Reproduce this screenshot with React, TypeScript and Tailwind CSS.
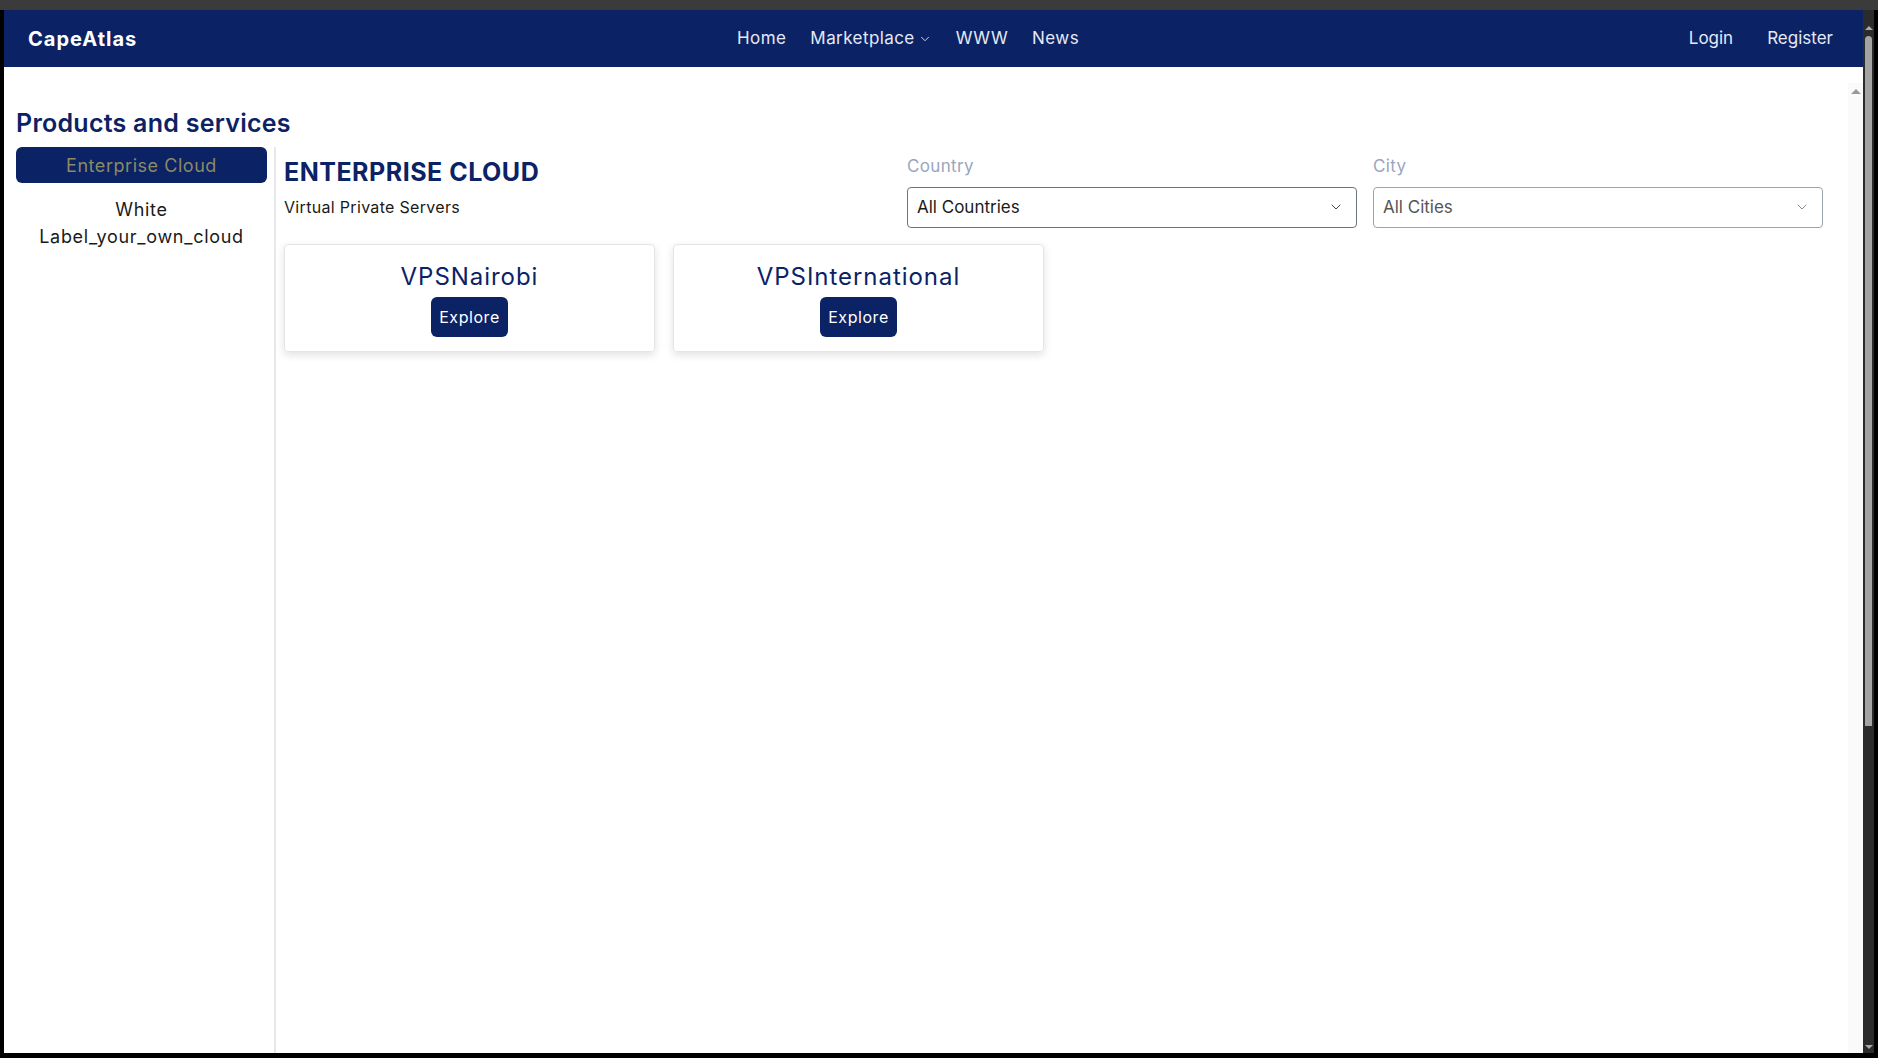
import { ChevronDown } from 'lucide-react';

const navy = 'bg-[#0b2265]';

const navLinks = ['Home', 'Marketplace', 'WWW', 'News'];

const products = [
	{ name: 'VPSNairobi' },
	{ name: 'VPSInternational' },
];

const App = () => {
	return (
		<div
			className="w-full h-screen bg-black flex flex-col overflow-hidden"
			style={{ fontFamily: 'Inter, "Noto Sans", sans-serif' }}
		>
			{/* Browser top strip */}
			<div className="h-[10px] bg-[#3b3b3b] shrink-0" />

			<div className="flex flex-1 min-h-0">
				<div className="w-[4px] bg-black shrink-0" />

				{/* Page */}
				<div className="flex-1 flex flex-col bg-white min-w-0">
					{/* Navbar */}
					<nav className={`h-[57px] ${navy} flex items-center pl-6 pr-[30px] shrink-0`}>
						<div className="w-[709px] shrink-0 text-white font-bold text-[20px] tracking-[0.05em]">CapeAtlas</div>
						<div className="flex items-center gap-[24px] text-[17px] tracking-[0.025em] text-[#e5e9f5]">
							{navLinks.map(link => (
								<a key={link} className="flex items-center gap-[3px] cursor-pointer">
									{link}
									{link === 'Marketplace' && <ChevronDown size={14} strokeWidth={1.5} />}
								</a>
							))}
						</div>
						<div className="flex-1" />
						<div className="flex items-center gap-[34px] text-[17px] text-[#e5e9f5]">
							<a>Login</a>
							<a>Register</a>
						</div>
					</nav>

					<div className="flex flex-1 min-h-0">
						<div className="flex-1 flex flex-col min-w-0 pl-3">
							<h1 className="text-[#0b2265] font-semibold text-[25px] tracking-[0.01em] mt-[41px] mb-[8px] leading-tight">
								Products and services
							</h1>

							<div className="flex flex-1 min-h-0">
								{/* Sidebar */}
								<aside className="w-[260px] shrink-0 border-r-2 border-[#e8e8e8] pr-2">
									<button className={`w-[251px] h-[36px] rounded-md ${navy} text-[#8b8a66] text-[18px] tracking-[0.03em]`}>
										Enterprise Cloud
									</button>
									<div className="w-[251px] text-center text-[18px] tracking-[0.04em] text-[#1a1a1a] leading-[27px] mt-[13px]">
										White
										<br />
										Label_your_own_cloud
									</div>
								</aside>

								{/* Main */}
								<main className="flex-1 pl-[8px] pr-[25px]">
									<div className="flex">
										<div className="flex-1">
											<h2 className="text-[#0b2265] font-bold text-[25px] tracking-[0.02em] leading-tight mt-[10px]">
												ENTERPRISE CLOUD
											</h2>
											<p className="text-[16px] tracking-[0.02em] text-[#1a1a1a] mt-[6px]">Virtual Private Servers</p>
										</div>
										<div className="w-[450px] mr-4">
											<label className="block text-[17px] tracking-[0.02em] text-[#9aa6bd] mt-[7px] mb-[7px]">Country</label>
											<div className="h-[41px] border border-[#6b7280] rounded flex items-center justify-between px-[9px] text-[17px] text-[#1a1a1a]">
												<span>All Countries</span>
												<ChevronDown size={16} strokeWidth={1.5} className="text-[#444] mr-[3px]" />
											</div>
										</div>
										<div className="w-[450px]">
											<label className="block text-[17px] tracking-[0.02em] text-[#9aa6bd] mt-[7px] mb-[7px]">City</label>
											<div className="h-[41px] border border-[#9ca3af] rounded flex items-center justify-between px-[9px] text-[17px] text-[#555]">
												<span>All Cities</span>
												<ChevronDown size={16} strokeWidth={1.5} className="text-[#888] mr-[3px]" />
											</div>
										</div>
									</div>

									<div className="flex gap-[18px] mt-[16px]">
										{products.map(p => (
											<div
												key={p.name}
												className="w-[371px] h-[108px] border border-[#e5e5e5] rounded shadow-[0_3px_8px_rgba(0,0,0,0.12)] flex flex-col items-center pt-[17px]"
											>
												<div className="text-[#0b2265] text-[24px] tracking-[0.04em] leading-[30px]">{p.name}</div>
												<button className={`mt-[5px] h-[40px] px-[8px] rounded-md ${navy} text-white text-[16px] tracking-[0.035em]`}>
													Explore
												</button>
											</div>
										))}
									</div>
								</main>
							</div>
						</div>

						{/* Inner scroll strip */}
						<div className="w-[15px] shrink-0 bg-[#fafafa] mt-[16px] flex justify-center pt-[6px]">
							<div className="w-0 h-0 border-l-[5px] border-r-[5px] border-b-[5px] border-l-transparent border-r-transparent border-b-[#999]" />
						</div>
					</div>
				</div>

				{/* Window scrollbar */}
				<div className="w-[11px] bg-[#2b2b2b] shrink-0 flex flex-col items-center pt-[16px]">
					<div className="w-0 h-0 border-l-[4px] border-r-[4px] border-b-[4px] border-l-transparent border-r-transparent border-b-[#aaa]" />
					<div className="w-[7px] h-[690px] bg-[#a3a3a3] rounded-t-full mt-[6px]" />
					<div className="flex-1" />
					<div className="w-0 h-0 border-l-[4px] border-r-[4px] border-t-[4px] border-l-transparent border-r-transparent border-t-[#aaa] mb-[4px]" />
				</div>
				<div className="w-[4px] bg-black shrink-0" />
			</div>

			<div className="h-[5px] bg-black shrink-0" />
		</div>
	);
};

export default App;
